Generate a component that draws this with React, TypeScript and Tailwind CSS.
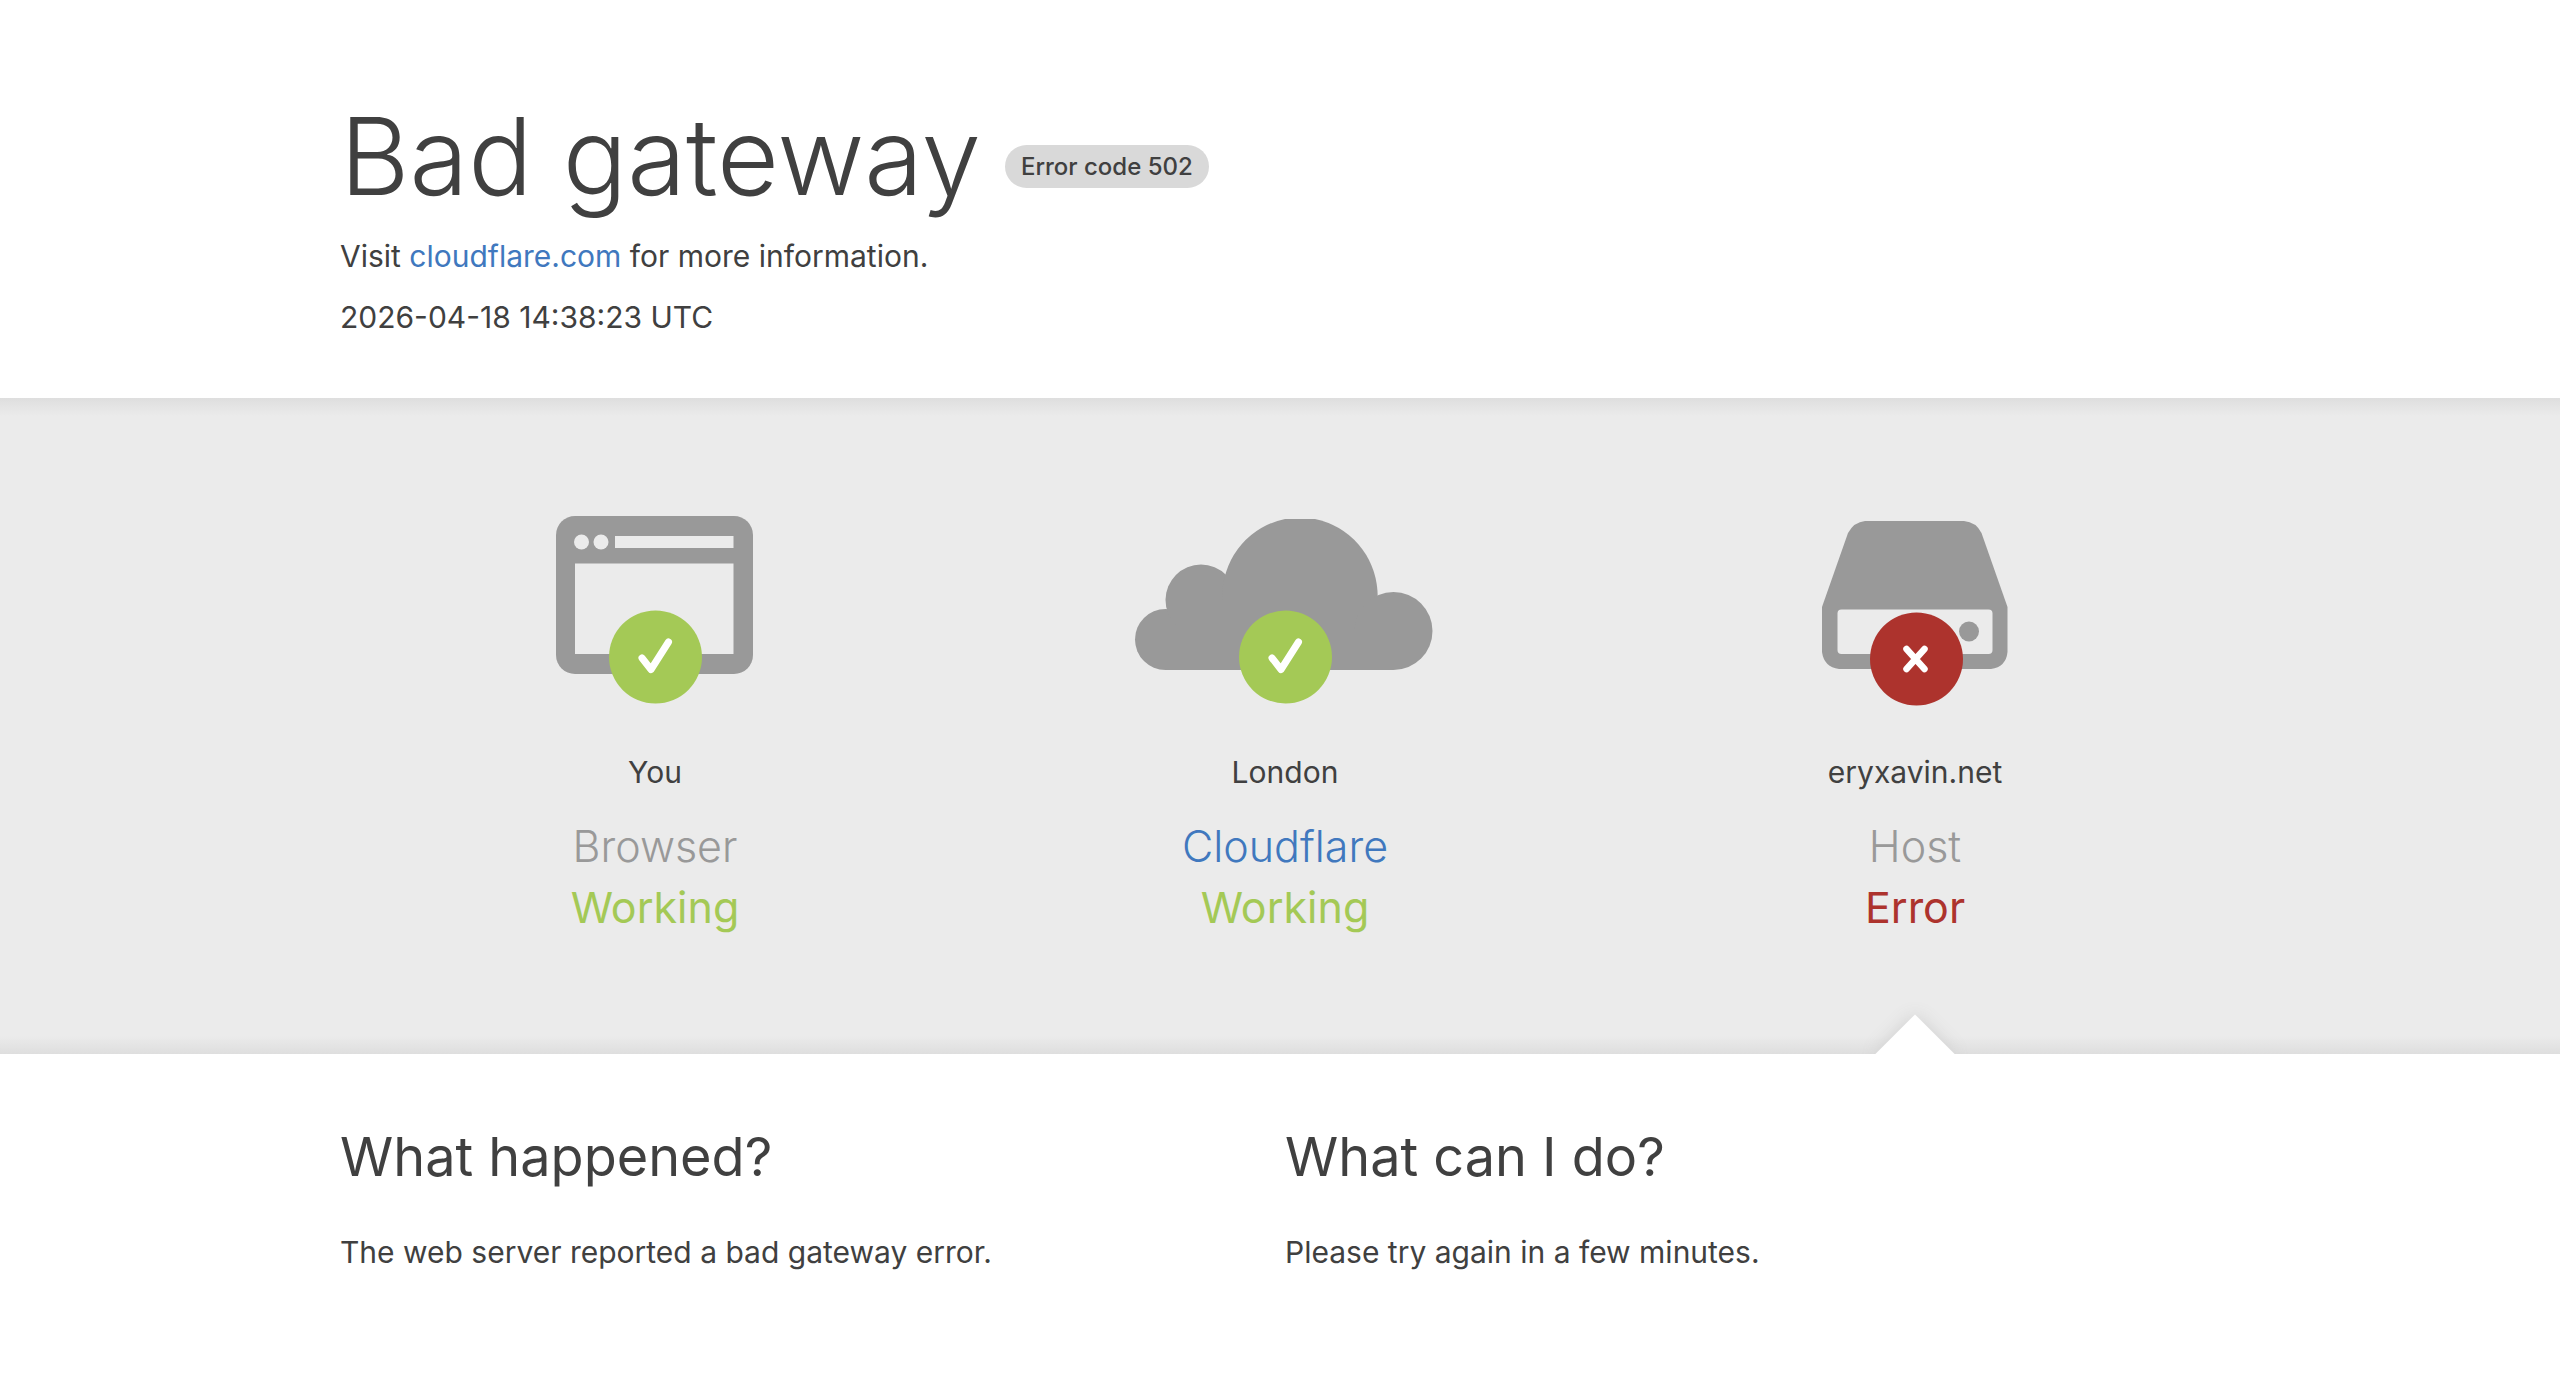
import React from 'react';

const OkBadge = () => (
  <>
    <circle cx="160.5" cy="147" r="46.5" fill="#a4c956" />
    <path
      d="M147 148L156 159.5L173.5 132"
      fill="none"
      stroke="#fff"
      strokeWidth="7"
      strokeLinecap="round"
      strokeLinejoin="round"
    />
  </>
);

const ErrorBadge = () => (
  <>
    <circle cx="161.5" cy="149" r="46.5" fill="#ad332d" />
    <path d="M151.5 139L169.5 159M169.5 139L151.5 159" stroke="#fff" strokeWidth="6.5" strokeLinecap="round" />
  </>
);

const BrowserIcon = () => (
  <>
    <rect x="61" y="6" width="197" height="158" rx="19" fill="#999" />
    <circle cx="86.5" cy="32" r="7.5" fill="#ebebeb" />
    <circle cx="106" cy="32" r="7.5" fill="#ebebeb" />
    <path d="M120 26H238.5V38H120ZM80 53.5H238.5V144H80Z" fill="#ebebeb" />
  </>
);

const CloudIcon = () => (
  <g fill="#999">
    <circle cx="40.5" cy="129.5" r="30.5" />
    <circle cx="76" cy="90" r="35.5" />
    <path d="M160 9A78.5 78.5 0 0 0 150 160H200A78.5 78.5 0 0 0 190 9Z" />
    <circle cx="268.5" cy="121" r="39" />
    <path d="M40 115H60V90H110V60H200V120H268V160H40Z" />
  </g>
);

const HostIcon = () => (
  <>
    <path
      d="M110 11H209Q221 12 226.5 23L252.5 97V142Q251 157 236 159H84Q69 157 67 142V97L93 23Q99 12 110 11Z"
      fill="#999"
    />
    <rect x="82.5" y="99.5" width="155" height="44.5" rx="4" fill="#ebebeb" />
    <circle cx="214" cy="121.5" r="10" fill="#999" />
  </>
);

const columns = [
  { icon: <BrowserIcon />, badge: <OkBadge />, place: 'You', name: 'Browser', status: 'Working', ok: true },
  { icon: <CloudIcon />, badge: <OkBadge />, place: 'London', name: 'Cloudflare', status: 'Working', ok: true, link: true },
  { icon: <HostIcon />, badge: <ErrorBadge />, place: 'eryxavin.net', name: 'Host', status: 'Error', ok: false },
];

const Header = () => (
  <header className="mx-auto max-w-[1900px] pt-[96px] pb-[57px] pl-[10px]">
    <h1 className="flex items-center gap-[24px]">
      <span className="text-[107px] leading-[120px] font-light">Bad gateway</span>
      <span className="mt-[20px] rounded-full bg-[#d9d9d9] px-4 text-[24px] leading-[43px] font-medium">
        Error code 502
      </span>
    </h1>
    <p className="mt-[16px] text-[30px] leading-[48px]">
      Visit{' '}
      <a href="https://www.cloudflare.com/" className="text-[#4078be]">
        cloudflare.com
      </a>{' '}
      for more information.
    </p>
    <p className="mt-[13px] text-[30px] leading-[48px]">2026-04-18 14:38:23 UTC</p>
  </header>
);

const StatusBand = () => (
  <section className="bg-[#ebebeb] bg-[linear-gradient(to_bottom,#dedede,#ebebeb_18px,#ebebeb_calc(100%-18px),#dedede)]">
    <div className="mx-auto grid max-w-[1900px] grid-cols-3 pl-[10px]">
      {columns.map((col) => (
        <div key={col.name} className="relative flex flex-col items-center overflow-hidden pt-[112px] pb-[116px] text-center">
          <svg width="320" height="204" viewBox="0 0 320 204" aria-hidden="true">
            {col.icon}
            {col.badge}
          </svg>
          <span className="mt-[34px] text-[30px] leading-[48px]">{col.place}</span>
          <h3 className="mt-[20px] text-[43px] leading-[61px] font-light text-[#999]">
            {col.link ? (
              <a href="https://www.cloudflare.com/" className="text-[#4078be]">
                {col.name}
              </a>
            ) : (
              col.name
            )}
          </h3>
          <span className={`text-[43px] leading-[61px] ${col.ok ? 'text-[#a4c956]' : 'text-[#ad332d]'}`}>
            {col.status}
          </span>
          {/* notch pointing at the failing column */}
          {!col.ok && (
            <div className="absolute -bottom-7 left-1/2 size-14 -translate-x-1/2 rotate-45 bg-white shadow-[0_0_18px_#cecece]" />
          )}
        </div>
      ))}
    </div>
  </section>
);

const Help = () => (
  <section className="mx-auto grid max-w-[1900px] grid-cols-2 pt-[64px] pl-[10px]">
    <div>
      <h2 className="text-[54px] leading-[78px]">What happened?</h2>
      <p className="mt-[32px] text-[30px] leading-[48px]">The web server reported a bad gateway error.</p>
    </div>
    <div>
      <h2 className="text-[54px] leading-[78px]">What can I do?</h2>
      <p className="mt-[32px] text-[30px] leading-[48px]">Please try again in a few minutes.</p>
    </div>
  </section>
);

export default function App() {
  return (
    <div className="min-h-screen bg-white font-['Inter',sans-serif] text-[#404040]">
      <Header />
      <main>
        <StatusBand />
        <Help />
      </main>
    </div>
  );
}
